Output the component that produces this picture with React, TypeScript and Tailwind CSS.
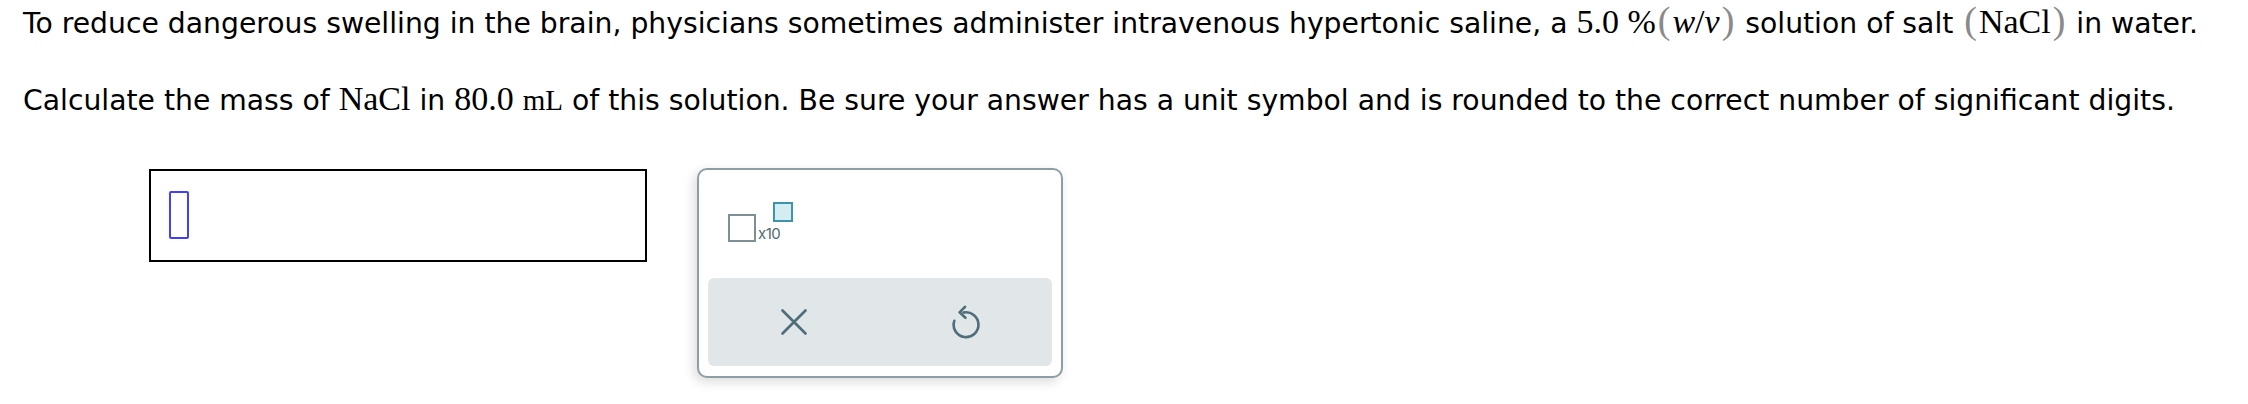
const sans = "font-['DejaVu_Sans',sans-serif]"
const serif = "font-['Liberation_Serif',serif]"

function Paren({ children }: { children: string }) {
  return (
    <span className={`${serif} text-[38px] leading-none text-[#8a8a8a] mx-[2px]`}>{children}</span>
  )
}

function Math({ children, small }: { children: React.ReactNode; small?: boolean }) {
  return (
    <span className={`${serif} leading-none text-black ${small ? "text-[29px]" : "text-[34px]"}`}>
      {children}
    </span>
  )
}

function CloseIcon() {
  return (
    <svg width="28" height="28" viewBox="0 0 28 28" fill="none" stroke="#4f6d7a" strokeWidth="2.7" strokeLinecap="round">
      <path d="M2.5 2.5 L25.5 25.5 M25.5 2.5 L2.5 25.5" />
    </svg>
  )
}

function UndoIcon() {
  return (
    <svg width="32" height="34" viewBox="0 0 32 34" fill="none" stroke="#4f6d7a" strokeWidth="2.6" strokeLinecap="round" strokeLinejoin="round">
      <path d="M13.5 7.6 A12.4 12.4 0 1 1 4.3 15.8" />
      <path d="M15 1.8 L9.6 7.4 L15.4 12.8" />
    </svg>
  )
}

export default function App() {
  return (
    <div className={`bg-white min-h-[404px] pl-[23px] text-black ${sans}`}>
      <p className="text-[28.25px] leading-[48px] h-[48px] whitespace-nowrap">
        To reduce dangerous swelling in the brain, physicians sometimes administer intravenous hypertonic saline, a{" "}
        <Math>5.0 %</Math>
        <Paren>(</Paren>
        <Math>
          <i>w</i>/<i>v</i>
        </Math>
        <Paren>)</Paren> solution of salt <Paren>(</Paren>
        <Math>NaCl</Math>
        <Paren>)</Paren> in water.
      </p>
      <p className="mt-[29px] text-[28.25px] leading-[48px] h-[48px] whitespace-nowrap">
        Calculate the mass of <Math>NaCl</Math> in <Math>80.0</Math> <Math small>mL</Math> of this solution. Be sure your
        answer has a unit symbol and is rounded to the correct number of significant digits.
      </p>

      <div className="mt-[43px] ml-[126px] flex items-start gap-[50px]">
        <div className="mt-[1px] w-[498px] h-[93px] border-2 border-black pl-[18px] pt-[20px]">
          <div className="w-[20px] h-[48px] border-2 border-[#4040ff] rounded-[2px]" />
        </div>

        <div className="w-[366px] h-[210px] border-2 border-[#8c9fa6] rounded-[10px] bg-white shadow-[-3px_4px_12px_rgba(0,0,0,0.14)] flex flex-col">
          <div className="h-[108px] pl-[29px] pt-[32px] flex items-start">
            <div className="mt-[12px] w-[28px] h-[28px] border-[2.5px] border-[#7d9098]" />
            <span className="mt-[24px] ml-[2px] text-[15px] leading-[16px] text-[#4f6872] font-['Inter',sans-serif] tracking-[-0.5px]">
              x10
            </span>
            <div className="-ml-[7px] w-[20px] h-[20px] border-[2.5px] border-[#3f93ad] bg-[#d4edf3]" />
          </div>
          <div className="mx-[9px] h-[88px] rounded-[6px] bg-[#e1e6e9] grid grid-cols-2 place-items-center">
            <CloseIcon />
            <UndoIcon />
          </div>
        </div>
      </div>
    </div>
  )
}
